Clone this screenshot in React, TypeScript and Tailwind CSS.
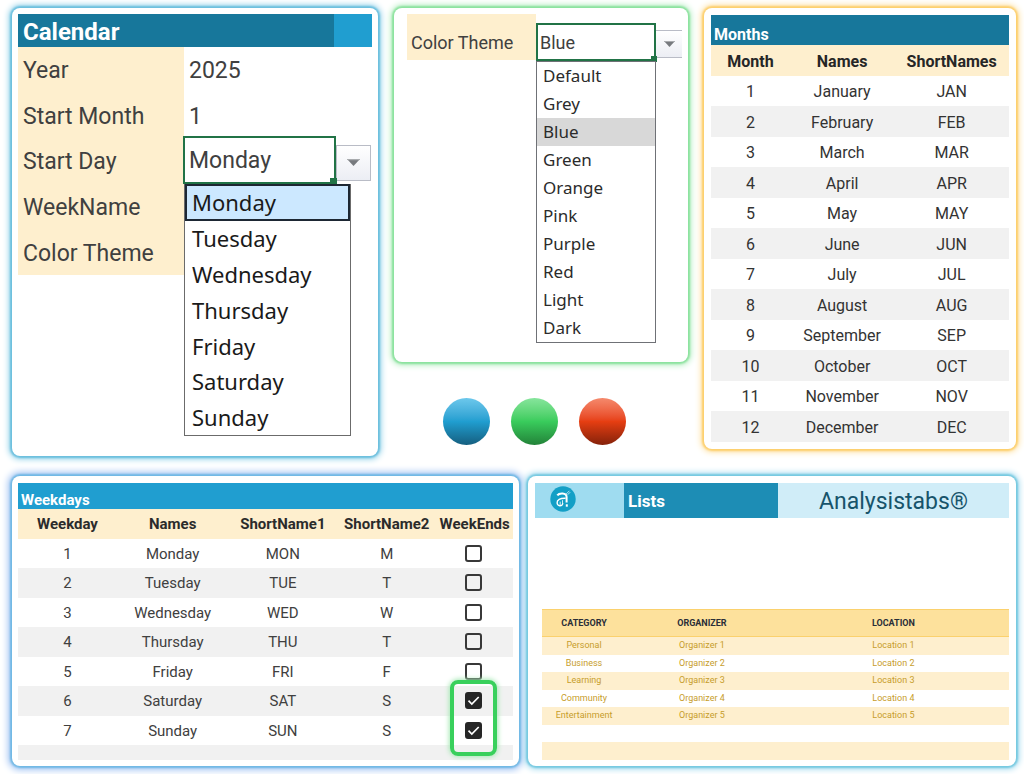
import { useState } from "react";

const days = ["Monday", "Tuesday", "Wednesday", "Thursday", "Friday", "Saturday", "Sunday"];
const themes = ["Default", "Grey", "Blue", "Green", "Orange", "Pink", "Purple", "Red", "Light", "Dark"];
const months = [
  "January", "February", "March", "April", "May", "June",
  "July", "August", "September", "October", "November", "December",
];
const shortDays = ["M", "T", "W", "T", "F", "S", "S"];
const lists = ["Personal", "Business", "Learning", "Community", "Entertainment"];

const roboto = "font-['Roboto','Liberation_Sans',sans-serif]";

function Arrow({ className }: { className: string }) {
  return (
    <svg viewBox="0 0 13 7" className={className} aria-hidden="true">
      <path d="M0 0H13L6.5 7Z" fill="#777a7e" />
      <path d="M0 0H13L12 1.2H1Z" fill="#a9abae" />
    </svg>
  );
}

function CalendarPanel() {
  const [day, setDay] = useState("Monday");
  const [open, setOpen] = useState(true);
  const label = "flex items-center bg-[#feefce] pt-[2px] pl-[5px]";
  const value = "w-full bg-transparent pt-[2px] pl-[5px] outline-none";
  return (
    <section className="h-[448px] rounded-lg bg-white p-[6px] shadow-[0_0_2px_2px_#6bbfde,0_0_6px_3px_#8fd0e8]">
      <div className="flex h-[33px] bg-[#209ed0] font-bold text-white">
        <h2 className="flex flex-1 items-center bg-[#17779b] pt-[2px] pl-[5px] text-[24px] leading-none">Calendar</h2>
        <div className="w-[38px]" />
      </div>
      <div className="grid h-[228px] grid-cols-[166px_1fr] grid-rows-5 text-[23px] leading-none text-[#404040]">
        <label htmlFor="year" className={label}>Year</label>
        <input id="year" defaultValue="2025" className={value} />
        <label htmlFor="month" className={label}>Start Month</label>
        <input id="month" defaultValue="1" className={value} />
        <label htmlFor="day" className={label}>Start Day</label>
        <div className="relative flex items-end">
          <div className="relative -ml-px h-[48px] flex-1 border-[2px] border-[#217346]">
            <select
              id="day"
              value={day}
              onChange={(e) => setDay(e.target.value)}
              className="h-full w-full appearance-none bg-white pt-[2px] pl-1 leading-[30px] outline-none"
            >
              {days.map((d) => <option key={d}>{d}</option>)}
            </select>
            <span className="absolute -right-[3px] -bottom-[3px] size-[7px] bg-[#217346]" />
          </div>
          <button
            type="button"
            aria-label="Show days"
            onClick={() => setOpen(!open)}
            className="mr-px mb-[3px] flex h-[36px] w-[35px] items-center justify-center border border-[#b9bcc6] bg-linear-to-b from-white to-[#eceef4]"
          >
            <Arrow className="w-[13px]" />
          </button>
          {open && (
            <ul className="absolute top-full left-0 z-10 grid h-[252px] w-[167px] auto-rows-fr border border-[#6b6b6b] bg-white font-['Noto_Sans',sans-serif] text-[22px] leading-none text-[#1a1a1a]">
              {days.map((d) => (
                <li key={d} className="flex">
                  <button
                    type="button"
                    onClick={() => setDay(d)}
                    className={
                      d === day
                        ? "-mt-px flex-1 border-[2px] border-[#1d2733] bg-[#cce8ff] pl-[5px] text-left"
                        : "flex-1 pl-[7px] text-left"
                    }
                  >
                    {d}
                  </button>
                </li>
              ))}
            </ul>
          )}
        </div>
        <div className={label}>WeekName</div>
        <div />
        <div className={label}>Color Theme</div>
        <div />
      </div>
    </section>
  );
}

function ThemePanel() {
  const [theme, setTheme] = useState("Blue");
  const [open, setOpen] = useState(true);
  return (
    <section className="h-[354px] rounded-lg bg-white px-[6px] pt-[6px] pl-[13px] shadow-[0_0_2px_2px_#8be29d,0_0_6px_3px_#b2ecbf]">
      <div className="flex text-[18px] leading-none text-[#404040]">
        <label htmlFor="theme" className="flex h-[46px] w-[129px] items-center bg-[#feefce] pt-[12px] pl-[4px]">
          Color Theme
        </label>
        <div className="relative flex flex-1 items-center pt-[9px]">
          <div className="relative h-[38px] w-[120px] border-[2px] border-[#217346]">
            <select
              id="theme"
              value={theme}
              onChange={(e) => setTheme(e.target.value)}
              className="h-full w-full appearance-none bg-white pt-[2px] pl-[2px] leading-[24px] outline-none"
            >
              {themes.map((t) => <option key={t}>{t}</option>)}
            </select>
            <span className="absolute -right-[3px] -bottom-[3px] size-[6px] bg-[#217346]" />
          </div>
          <button
            type="button"
            aria-label="Show themes"
            onClick={() => setOpen(!open)}
            className="mt-[4px] flex h-[28px] w-[26px] items-center justify-center border-y border-[#b9bcc6] bg-linear-to-b from-white to-[#eceef4]"
          >
            <Arrow className="w-[11px]" />
          </button>
          {open && (
            <ul className="absolute top-full left-0 z-10 w-[120px] border border-[#6f7176] bg-white font-['Noto_Sans',sans-serif] text-[17px] leading-[28px] text-[#2b2b2b]">
              {themes.map((t) => (
                <li key={t} className="flex">
                  <button
                    type="button"
                    onClick={() => setTheme(t)}
                    className={t === theme ? "flex-1 bg-[#d8d8d8] pl-[6px] text-left" : "flex-1 pl-[6px] text-left"}
                  >
                    {t}
                  </button>
                </li>
              ))}
            </ul>
          )}
        </div>
      </div>
    </section>
  );
}

function MonthsPanel() {
  return (
    <section className="h-[441px] rounded-lg bg-white px-[7px] pt-[7px] shadow-[0_0_2px_2px_#fdcf6c,0_0_6px_3px_#fde0a0]">
      <h2 className="h-[30px] bg-[#17779b] pt-[8px] pl-[3px] text-[16px] leading-[24px] font-bold text-white">Months</h2>
      <table className="w-full table-fixed text-center text-[16px] leading-none text-[#333333] [&_td]:pt-[2px] [&_th]:pt-[2px]">
        <colgroup>
          <col className="w-[26.5%]" />
          <col className="w-[35%]" />
          <col />
        </colgroup>
        <thead>
          <tr className="h-[31px] bg-[#feefce] text-[#262626]">
            <th>Month</th>
            <th>Names</th>
            <th>ShortNames</th>
          </tr>
        </thead>
        <tbody>
          {months.map((m, i) => (
            <tr key={m} className="h-[30px] even:h-[31px] even:bg-[#f1f1f1]">
              <td>{i + 1}</td>
              <td>{m}</td>
              <td>{m.slice(0, 3).toUpperCase()}</td>
            </tr>
          ))}
        </tbody>
      </table>
    </section>
  );
}

function WeekdaysPanel() {
  return (
    <section className="h-[290px] rounded-lg bg-white px-[6px] pt-[7px] shadow-[0_0_2px_2px_#6fb8e4,0_0_7px_4px_#a3c4f3]">
      <h2 className="h-[26px] bg-[#209ed0] pt-[6px] pl-[3px] text-[15px] leading-[22px] font-bold text-white">Weekdays</h2>
      <div className="relative">
        <table className="w-full table-fixed text-center text-[15px] leading-none text-[#404040] [&_td]:pt-px [&_th]:pt-px">
          <colgroup>
            <col className="w-[20%]" />
            <col className="w-[22.5%]" />
            <col className="w-[22%]" />
            <col className="w-[20%]" />
            <col />
          </colgroup>
          <thead>
            <tr className="h-[30px] bg-[#feefce] text-[#2b2b2b]">
              <th>Weekday</th>
              <th>Names</th>
              <th>ShortName1</th>
              <th>ShortName2</th>
              <th>WeekEnds</th>
            </tr>
          </thead>
          <tbody>
            {days.map((d, i) => (
              <tr key={d} className="h-[29px] even:h-[30px] even:bg-[#f1f1f1]">
                <td>{i + 1}</td>
                <td>{d}</td>
                <td>{d.slice(0, 3).toUpperCase()}</td>
                <td>{shortDays[i]}</td>
                <td className="pr-[2px] pb-[2px]">
                  <label className="relative mx-auto block size-[17px]">
                    <input
                      type="checkbox"
                      aria-label={d}
                      defaultChecked={i > 4}
                      className="peer block size-[17px] appearance-none rounded-[3px] border-2 border-[#383838] checked:border-[#262626] checked:bg-[#262626]"
                    />
                    <svg viewBox="0 0 17 17" className="absolute inset-0 hidden peer-checked:block" aria-hidden="true">
                      <path d="M3.5 8.7L6.8 12L13.7 5" fill="none" stroke="#fff" strokeWidth="1.7" />
                    </svg>
                  </label>
                </td>
              </tr>
            ))}
            <tr className="h-[15px] bg-[#f1f1f1]">
              <td colSpan={5} />
            </tr>
          </tbody>
        </table>
        <div className="pointer-events-none absolute right-[16px] bottom-[4px] h-[76px] w-[47px] rounded-lg border-4 border-[#39d05c] shadow-[0_0_5px_1px_#a5e8b4]" />
      </div>
    </section>
  );
}

function Logo() {
  return (
    <svg viewBox="0 0 26 26" className="size-[26px]" aria-hidden="true">
      <circle cx="13" cy="13" r="12.7" fill="#139fc6" />
      <path d="M7.3 9.4C9 6.9 16.6 6.2 16.6 11V16.6" fill="none" stroke="#fff" strokeWidth="2" />
      <path d="M15.6 12.2C10 12 6.9 13.8 7.1 17C7.4 20.2 11.8 21 13 17.4" fill="none" stroke="#fff" strokeWidth="1.4" />
      <path d="M10.2 15.6V19M12.5 14.2V18.6" stroke="#fff" strokeWidth="0.8" />
      <path d="M15.8 18.3H17.8V20.7H15.8Z" fill="#fff" />
      <path d="M15.8 8.4L19.4 4.8M17.6 8.8L20.2 6.2" stroke="#d6f1f8" strokeWidth="0.8" />
    </svg>
  );
}

function ListsPanel() {
  return (
    <section className="h-[290px] rounded-lg bg-white px-[7px] pt-[7px] shadow-[0_0_2px_2px_#75c9e0,0_0_6px_3px_#9fd9ee]">
      <div className="grid h-[35px] grid-cols-[89fr_154fr_231fr] items-stretch">
        <div className="bg-[#9fdcf0] pt-[3px] pl-[15px]"><Logo /></div>
        <h2 className="flex items-center bg-[#1d8db5] pt-[2px] pl-[4px] text-[17px] leading-none font-bold text-white">Lists</h2>
        <div className="flex items-center justify-center bg-[#d0edf8] pt-[2px] text-[23px] leading-none text-[#17546b]">Analysistabs®</div>
      </div>
      <table className="mt-[91px] ml-[7px] w-[calc(100%-7px)] table-fixed text-center text-[9px] leading-none text-[#c79d2b]">
        <colgroup>
          <col className="w-[18%]" />
          <col className="w-[32.5%]" />
          <col />
        </colgroup>
        <thead>
          <tr className="h-[27px] border-y border-[#fbd16d] bg-[#fde19c] text-[#2a2e38]">
            <th>CATEGORY</th>
            <th>ORGANIZER</th>
            <th>LOCATION</th>
          </tr>
        </thead>
        <tbody>
          {lists.map((name, i) => (
            <tr key={name} className="h-[17px] odd:h-[18px] odd:bg-[#feefce]">
              <td>{name}</td>
              <td>Organizer {i + 1}</td>
              <td>Location {i + 1}</td>
            </tr>
          ))}
          <tr className="h-[17px]"><td colSpan={3} /></tr>
          <tr className="h-[18px] bg-[#feefce]"><td colSpan={3} /></tr>
        </tbody>
      </table>
    </section>
  );
}

export default function App() {
  return (
    <main className={`flex flex-col gap-[20px] bg-white pt-[8px] pr-[8px] pb-[8px] pl-[12px] ${roboto}`}>
      <div className="grid grid-cols-[366fr_294fr_312fr] items-start gap-[16px]">
        <CalendarPanel />
        <div>
          <ThemePanel />
          <div className="mt-[36px] flex gap-[21px] pl-[49px]">
            <span className="size-[47px] rounded-full bg-linear-to-b from-[#6cc8ec] via-[#209ed0] to-[#155f80]" />
            <span className="size-[47px] rounded-full bg-linear-to-b from-[#86e59c] via-[#39cc5c] to-[#238339]" />
            <span className="size-[47px] rounded-full bg-linear-to-b from-[#f5896c] via-[#e63e12] to-[#85220a]" />
          </div>
        </div>
        <MonthsPanel />
      </div>
      <div className="grid grid-cols-[507fr_488fr] gap-[9px]">
        <WeekdaysPanel />
        <ListsPanel />
      </div>
    </main>
  );
}
